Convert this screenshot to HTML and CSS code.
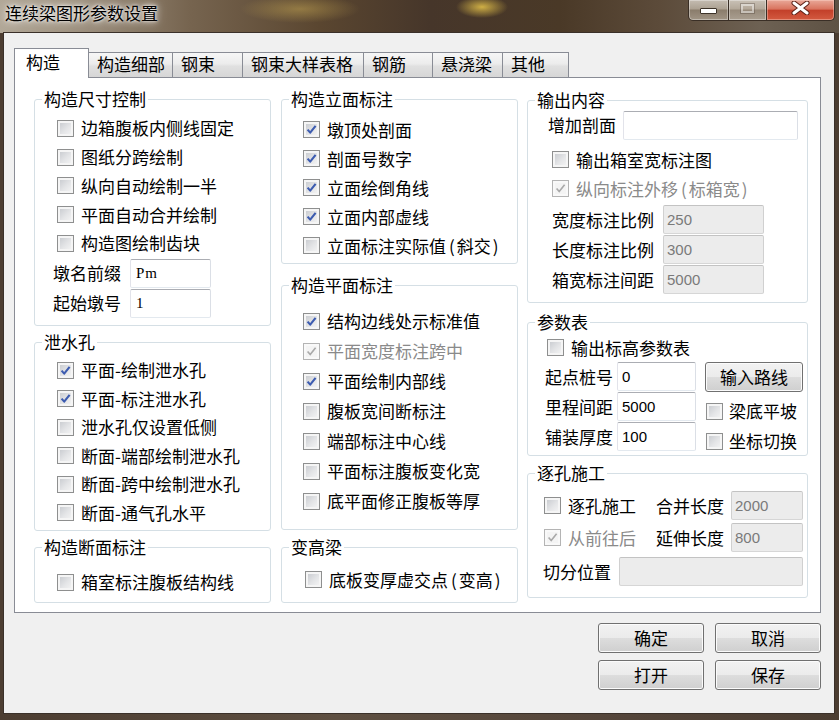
FILE: index.html
```html
<!DOCTYPE html>
<html lang="zh-CN">
<head>
<meta charset="utf-8">
<title>连续梁图形参数设置</title>
<link rel="stylesheet" href="styles.css">
</head>
<body>
<div class="window">
  <div class="titlebar">
    <div class="title">连续梁图形参数设置</div>
    <div class="caption">
      <div class="cap cap-min"><span class="min-glyph"></span></div>
      <div class="cap cap-max"><span class="max-glyph"></span></div>
      <div class="cap cap-close">
        <svg class="x-glyph" width="21" height="14" viewBox="0 0 21 14"><path d="M4 2 L17 12 M17 2 L4 12" stroke="#5b2015" stroke-width="5" stroke-linecap="round"/><path d="M4 2 L17 12 M17 2 L4 12" stroke="#ffffff" stroke-width="3" stroke-linecap="round"/></svg>
      </div>
    </div>
  </div>

  <div class="client">
    <div class="tabs">
      <div class="tab active tw1">构造</div>
      <div class="tab tw2">构造细部</div>
      <div class="tab tw3">钢束</div>
      <div class="tab tw4">钢束大样表格</div>
      <div class="tab tw5">钢筋</div>
      <div class="tab tw6">悬浇梁</div>
      <div class="tab tw7">其他</div>
    </div>

    <div class="panel">
      <!-- column 1 -->
      <div class="col col1">
        <div class="group grp-size">
          <div class="legend">构造尺寸控制</div>
          <div class="checks">
            <div class="cb"><span class="box"></span>边箱腹板内侧线固定</div>
            <div class="cb"><span class="box"></span>图纸分跨绘制</div>
            <div class="cb"><span class="box"></span>纵向自动绘制一半</div>
            <div class="cb"><span class="box"></span>平面自动合并绘制</div>
            <div class="cb"><span class="box"></span>构造图绘制齿块</div>
          </div>
          <div class="fields">
            <span class="lbl">墩名前缀</span><input class="tb serif" type="text" value="Pm">
            <span class="lbl">起始墩号</span><input class="tb serif" type="text" value="1">
          </div>
        </div>

        <div class="group grp-drain">
          <div class="legend">泄水孔</div>
          <div class="checks">
            <div class="cb"><span class="box on"><svg viewBox="0 0 15 15"><path d="M3.6 7.6 L6.2 10.6 L11.6 3.8" /></svg></span>平面-绘制泄水孔</div>
            <div class="cb"><span class="box on"><svg viewBox="0 0 15 15"><path d="M3.6 7.6 L6.2 10.6 L11.6 3.8" /></svg></span>平面-标注泄水孔</div>
            <div class="cb"><span class="box"></span>泄水孔仅设置低侧</div>
            <div class="cb"><span class="box"></span>断面-端部绘制泄水孔</div>
            <div class="cb"><span class="box"></span>断面-跨中绘制泄水孔</div>
            <div class="cb"><span class="box"></span>断面-通气孔水平</div>
          </div>
        </div>

        <div class="group grp-section">
          <div class="legend">构造断面标注</div>
          <div class="checks">
            <div class="cb"><span class="box"></span>箱室标注腹板结构线</div>
          </div>
        </div>
      </div>

      <!-- column 2 -->
      <div class="col col2">
        <div class="group grp-elev">
          <div class="legend">构造立面标注</div>
          <div class="checks">
            <div class="cb"><span class="box on"><svg viewBox="0 0 15 15"><path d="M3.6 7.6 L6.2 10.6 L11.6 3.8" /></svg></span>墩顶处剖面</div>
            <div class="cb"><span class="box on"><svg viewBox="0 0 15 15"><path d="M3.6 7.6 L6.2 10.6 L11.6 3.8" /></svg></span>剖面号数字</div>
            <div class="cb"><span class="box on"><svg viewBox="0 0 15 15"><path d="M3.6 7.6 L6.2 10.6 L11.6 3.8" /></svg></span>立面绘倒角线</div>
            <div class="cb"><span class="box on"><svg viewBox="0 0 15 15"><path d="M3.6 7.6 L6.2 10.6 L11.6 3.8" /></svg></span>立面内部虚线</div>
            <div class="cb"><span class="box"></span>立面标注实际值<span class="po">(</span>斜交<span class="pc">)</span></div>
          </div>
        </div>

        <div class="group grp-plan">
          <div class="legend">构造平面标注</div>
          <div class="checks">
            <div class="cb"><span class="box on"><svg viewBox="0 0 15 15"><path d="M3.6 7.6 L6.2 10.6 L11.6 3.8" /></svg></span>结构边线处示标准值</div>
            <div class="cb dis"><span class="box on"><svg viewBox="0 0 15 15"><path d="M3.6 7.6 L6.2 10.6 L11.6 3.8" /></svg></span>平面宽度标注跨中</div>
            <div class="cb"><span class="box on"><svg viewBox="0 0 15 15"><path d="M3.6 7.6 L6.2 10.6 L11.6 3.8" /></svg></span>平面绘制内部线</div>
            <div class="cb"><span class="box"></span>腹板宽间断标注</div>
            <div class="cb"><span class="box"></span>端部标注中心线</div>
            <div class="cb"><span class="box"></span>平面标注腹板变化宽</div>
            <div class="cb"><span class="box"></span>底平面修正腹板等厚</div>
          </div>
        </div>

        <div class="group grp-vh">
          <div class="legend">变高梁</div>
          <div class="checks">
            <div class="cb"><span class="box"></span>底板变厚虚交点<span class="po">(</span>变高<span class="pc">)</span></div>
          </div>
        </div>
      </div>

      <!-- column 3 -->
      <div class="col col3">
        <div class="group grp-out">
          <div class="legend">输出内容</div>
          <div class="out-add">
            <span class="lbl">增加剖面</span><input class="tb" type="text" value="">
          </div>
          <div class="checks">
            <div class="cb"><span class="box"></span>输出箱室宽标注图</div>
            <div class="cb dis"><span class="box on"><svg viewBox="0 0 15 15"><path d="M3.6 7.6 L6.2 10.6 L11.6 3.8" /></svg></span>纵向标注外移<span class="po">(</span>标箱宽<span class="pc">)</span></div>
          </div>
          <div class="out-fields">
            <span class="lbl">宽度标注比例</span><input class="tb off" type="text" value="250" disabled>
            <span class="lbl">长度标注比例</span><input class="tb off" type="text" value="300" disabled>
            <span class="lbl">箱宽标注间距</span><input class="tb off" type="text" value="5000" disabled>
          </div>
        </div>

        <div class="group grp-param">
          <div class="legend">参数表</div>
          <div class="checks">
            <div class="cb"><span class="box"></span>输出标高参数表</div>
          </div>
          <div class="param-body">
            <div class="param-fields">
              <span class="lbl">起点桩号</span><input class="tb" type="text" value="0">
              <span class="lbl">里程间距</span><input class="tb" type="text" value="5000">
              <span class="lbl">铺装厚度</span><input class="tb" type="text" value="100">
            </div>
            <div class="param-side">
              <button class="btn btn-route" type="button">输入路线</button>
              <div class="side-checks">
                <div class="cb"><span class="box"></span>梁底平坡</div>
                <div class="cb"><span class="box"></span>坐标切换</div>
              </div>
            </div>
          </div>
        </div>

        <div class="group grp-span">
          <div class="legend">逐孔施工</div>
          <div class="span-row r1">
            <div class="cb"><span class="box"></span>逐孔施工</div>
            <span class="lbl">合并长度</span><input class="tb off" type="text" value="2000" disabled>
          </div>
          <div class="span-row r2">
            <div class="cb dis"><span class="box on"><svg viewBox="0 0 15 15"><path d="M3.6 7.6 L6.2 10.6 L11.6 3.8" /></svg></span>从前往后</div>
            <span class="lbl">延伸长度</span><input class="tb off" type="text" value="800" disabled>
          </div>
          <div class="span-row r3">
            <span class="lbl">切分位置</span><input class="tb off wide" type="text" value="" disabled>
          </div>
        </div>
      </div>
    </div>

    <div class="dlg-buttons">
      <button class="btn" type="button">确定</button>
      <button class="btn" type="button">取消</button>
      <button class="btn" type="button">打开</button>
      <button class="btn" type="button">保存</button>
    </div>
  </div>
</div>
</body>
</html>
```

FILE: styles.css
```css
* { box-sizing: border-box; }
html, body { margin: 0; padding: 0; }
body {
  font-family: "Noto Sans CJK SC", "Noto Sans", sans-serif;
  font-size: 17px;
  color: #000;
  background: #4a3b2e;
}

/* ---------- window frame ---------- */
.window {
  width: 839px;
  height: 720px;
  display: flex;
  flex-direction: column;
  background: linear-gradient(90deg, #4c3d31 0, #5e4f41 40%, #54453a 75%, #4b3d31 100%);
}
.titlebar {
  height: 33px;
  flex: none;
  display: flex;
  justify-content: space-between;
  align-items: flex-start;
  background:
    radial-gradient(ellipse 26px 11px at 482px 7px, rgba(222,188,72,.9), rgba(222,188,72,0)),
    radial-gradient(ellipse 60px 14px at 300px 9px, rgba(190,160,80,.55), rgba(190,160,80,0)),
    linear-gradient(90deg, #b2a898 0, #9a8d7b 90px, #76644f 190px, #5a4630 320px, #46362a 430px, #4a3927 560px, #5c4b3a 660px, #6d6153 760px, #5e5244 839px);
}
.title {
  padding-left: 5px;
  line-height: 26px;
  white-space: nowrap;
  text-shadow: 0 0 3px #fff, 0 0 7px rgba(255,255,255,.9), 0 0 12px rgba(255,255,255,.6);
}
.caption {
  display: flex;
  margin-right: 4px;
}
.cap {
  height: 21px;
  border: 1px solid #3a2f26;
  border-top: none;
  display: flex;
  justify-content: center;
  align-items: flex-start;
}
.cap-min {
  width: 41px;
  border-bottom-left-radius: 5px;
  padding-top: 8px;
  background: linear-gradient(#c4bcb1 0%, #aca192 45%, #8a7c6b 50%, #a09484 100%);
  box-shadow: inset 0 0 0 1px rgba(255,255,255,.35);
}
.cap-max {
  width: 39px;
  margin-left: -1px;
  padding-top: 3px;
  background: linear-gradient(#c9c1b6 0%, #b3a899 45%, #978a7a 50%, #aa9f91 100%);
  box-shadow: inset 0 0 0 1px rgba(255,255,255,.35);
}
.cap-close {
  width: 69px;
  margin-left: -1px;
  border-bottom-right-radius: 5px;
  padding-top: 1px;
  background: linear-gradient(#e9a898 0%, #d9745f 45%, #c3402a 52%, #d35a40 100%);
  box-shadow: inset 0 0 0 1px rgba(255,220,210,.4);
}
.min-glyph {
  width: 17px;
  height: 6px;
  background: #fff;
  border: 1px solid #3d3329;
  border-radius: 1px;
}
.max-glyph {
  width: 15px;
  height: 11px;
  border: 1px solid rgba(80,70,60,.35);
  box-shadow: inset 0 0 0 2px rgba(255,255,255,.45);
}
.x-glyph { display: block; }

/* ---------- client ---------- */
.client {
  margin-left: 4px;
  width: 830px;
  height: 680px;
  background: #f0f0f0;
  box-shadow: 0 0 0 1px #3a3029;
}
.tabs {
  display: flex;
  align-items: flex-end;
  height: 29px;
  margin-top: 15px;
  padding-left: 10px;
  position: relative;
  z-index: 1;
}
.tab {
  height: 25px;
  margin-right: -1px;
  padding: 1px 0 0 8px;
  line-height: 20px;
  white-space: nowrap;
  border: 1px solid #898c95;
  border-bottom: none;
  background: linear-gradient(#f6f6f6 0%, #ececec 45%, #e0e0e0 55%, #d6d6d6 100%);
}
.tab.active {
  height: 30px;
  margin-bottom: -1px;
  padding: 3px 0 0 11px;
  background: #fff;
}
.tw1 { width: 75px; }
.tw2 { width: 85px; }
.tw3 { width: 71px; }
.tw4 { width: 122px; }
.tw5 { width: 70px; }
.tw6 { width: 71px; }
.tw7 { width: 67px; }

.panel {
  margin-left: 10px;
  width: 807px;
  height: 536px;
  background: #fff;
  border: 1px solid #898c95;
  display: flex;
  align-items: flex-start;
  padding: 21px 12px 0 19px;
}
.col { display: flex; flex-direction: column; }
.col1 { width: 237px; }
.col2 { width: 237px; margin-left: 10px; }
.col3 { width: 281px; margin-left: 9px; }

/* ---------- group boxes ---------- */
.group {
  border: 1px solid #d5dfe5;
  border-radius: 3px;
  background: #fff;
}
.legend {
  width: max-content;
  height: 20px;
  margin: -11px 0 0 7px;
  padding: 0 2px;
  line-height: 20px;
  background: #fff;
  white-space: nowrap;
}
.grp-size    { height: 227px; }
.grp-drain   { height: 189px; margin-top: 16px; }
.grp-section { height: 56px;  margin-top: 16px; }
.grp-elev    { height: 165px; }
.grp-plan    { height: 245px; margin-top: 21px; }
.grp-vh      { height: 56px;  margin-top: 17px; }
.grp-out     { height: 203px; margin-top: 1px; }
.grp-param   { height: 134px; margin-top: 19px; }
.grp-span    { height: 125px; margin-top: 17px; }

/* ---------- checkboxes ---------- */
.cb {
  display: flex;
  align-items: center;
  height: 29px;
  line-height: 20px;
  white-space: nowrap;
}
.po { padding: 0 2px 0 3px; }
.pc { padding: 0 0 0 2px; }
.box {
  flex: none;
  width: 17px;
  height: 17px;
  margin-right: 7px;
  border: 1px solid #8e8f8f;
  background: linear-gradient(135deg, #c3c6cb 0%, #e4e5e7 55%, #f7f7f7 100%);
  box-shadow: inset 0 0 0 2px #f5f5f5;
}
.box svg {
  display: block;
  width: 15px;
  height: 15px;
}
.box svg path {
  fill: none;
  stroke: #3d5cb0;
  stroke-width: 2.1;
  stroke-linejoin: round;
}
.cb.dis { color: #8a8a8a; }
.cb.dis .box {
  border-color: #b4b4b4;
  background: #f4f4f4;
  box-shadow: inset 0 0 0 2px #f9f9f9;
}
.cb.dis .box svg path {
  stroke: #a9a9a9;
  stroke-width: 1.6;
}

.grp-size .checks    { padding: 5px 0 0 22px; }
.grp-size .cb        { height: 28.75px; }
.grp-drain .checks   { padding: 4px 0 0 22px; }
.grp-drain .cb       { height: 28.5px; }
.grp-section .checks { padding: 11px 0 0 22px; }
.grp-section .cb     { height: 28.5px; }
.grp-elev .checks    { padding: 6px 0 0 21px; }
.grp-plan .checks    { padding: 11px 0 0 21px; }
.grp-plan .cb        { height: 30px; }
.grp-vh .checks      { padding: 8px 0 0 23px; }
.grp-out .checks     { padding: 5px 0 0 24px; }
.grp-param .checks   { padding: 1px 0 0 19px; }

/* ---------- text boxes ---------- */
.lbl {
  line-height: 20px;
  white-space: nowrap;
}
.tb {
  height: 29px;
  margin: 0;
  padding: 0 0 0 4px;
  border: 1px solid;
  border-color: #abadb3 #dbdfe6 #e3e9ef #e2e3ea;
  border-radius: 2px;
  background: #fff;
  font-family: "Liberation Sans", Arial, sans-serif;
  font-size: 15px;
  color: #000;
  outline: none;
}
.tb.serif {
  font-family: "Liberation Serif", serif;
  font-size: 15px;
  letter-spacing: 1px;
  padding-left: 5px;
}
.tb.off {
  background: #ececec;
  border-color: #c3c3c3 #d0d0d0 #d6d6d6 #d0d0d0;
  color: #7a7a7a;
  padding-left: 3px;
}

.fields {
  display: grid;
  grid-template-columns: 77px 81px;
  row-gap: 1px;
  align-items: center;
  padding: 1px 0 0 18px;
}
.out-add {
  display: flex;
  align-items: center;
  height: 30px;
  padding-left: 20px;
}
.out-add .lbl { width: 75px; }
.out-add .tb { width: 175px; }
.out-fields {
  display: grid;
  grid-template-columns: 111px 101px;
  row-gap: 1px;
  align-items: center;
  padding: 2px 0 0 24px;
}

.param-body {
  display: flex;
  align-items: flex-start;
  padding-left: 17px;
}
.param-fields {
  display: grid;
  grid-template-columns: 72px 79px;
  row-gap: 1px;
  align-items: center;
}
.param-side {
  margin-left: 9px;
  display: flex;
  flex-direction: column;
}
.side-checks { margin-top: 4px; padding-left: 1px; }
.side-checks .cb { height: 30px; }
.side-checks .box { margin-right: 6px; }

.span-row {
  display: flex;
  align-items: center;
  height: 29px;
  padding-left: 16px;
}
.span-row.r1 { margin-top: 8px; }
.span-row.r2 { margin-top: 3px; }
.span-row.r3 { margin-top: 5px; padding-left: 15px; }
.span-row .cb { width: 112px; height: 29px; }
.span-row .lbl { width: 75px; }
.span-row.r3 .lbl { width: 76px; }
.span-row .tb { width: 72px; }
.span-row .tb.wide { width: 184px; }

/* ---------- buttons ---------- */
.btn {
  margin: 0;
  padding: 0;
  height: 30px;
  font: inherit;
  line-height: 20px;
  color: #000;
  border: 1px solid #707070;
  border-radius: 3px;
  background: linear-gradient(#f2f2f2 0%, #ebebeb 50%, #dddddd 51%, #cfcfcf 100%);
  box-shadow: inset 0 0 0 1px #fbfbfb;
}
.btn-route { width: 98px; }
.dlg-buttons {
  display: grid;
  grid-template-columns: 106px 106px;
  column-gap: 11px;
  row-gap: 7px;
  justify-content: end;
  margin-top: 10px;
  padding-right: 13px;
}
```
